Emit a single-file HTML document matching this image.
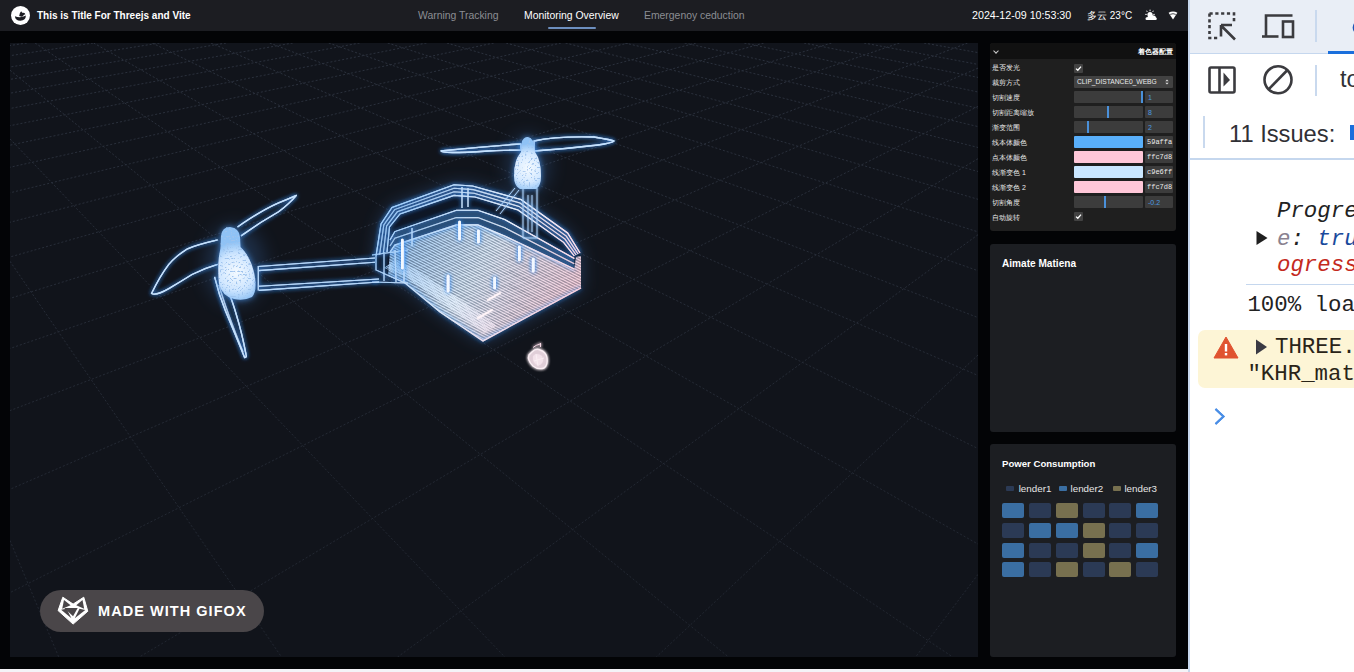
<!DOCTYPE html>
<html><head><meta charset="utf-8">
<style>
*{margin:0;padding:0;box-sizing:border-box}
html,body{width:1354px;height:672px;overflow:hidden;background:#fff;font-family:"Liberation Sans",sans-serif}
#app{position:absolute;left:0;top:0;width:1188px;height:669px;background:#030406}
#hdr{position:absolute;left:0;top:0;width:1188px;height:31px;background:#1c1d22}
.logo{position:absolute;left:11px;top:6px;width:19px;height:19px}
.title{position:absolute;left:37px;top:9px;font-size:10px;font-weight:bold;color:#fff;white-space:nowrap;line-height:13px}
.nav{position:absolute;top:9px;font-size:10.4px;color:#8b8d93;white-space:nowrap;line-height:13px}
.nav.on{color:#fff}
.uline{position:absolute;left:548px;top:27px;width:48px;height:2px;background:#6d8fbf;border-radius:1px}
.rt{position:absolute;top:9px;font-size:10.7px;color:#fff;white-space:nowrap;line-height:13px}
#canvas{position:absolute;left:10px;top:43px;width:968px;height:614px;background:#11141b;overflow:hidden}
.panel{position:absolute;left:990px;width:186px;background:#1c1e22;border-radius:3px}
.ptitle{position:absolute;left:12px;font-size:9.8px;font-weight:bold;color:#fff;white-space:nowrap;line-height:12px}
#gui{position:absolute;left:990px;top:43px;width:186px;height:188px;background:#1f1f1f;border-radius:3px;overflow:hidden}
#gui .tb{position:absolute;left:0;top:0;width:186px;height:16px;background:#111}
#gui .tt{position:absolute;right:3px;top:3.5px;font-size:6.7px;font-weight:bold;color:#fff;line-height:10px}
#gui .lab{position:absolute;left:2px;font-size:7px;color:#ebebeb;line-height:10px;white-space:nowrap}
.w{position:absolute;background:#424242;border-radius:1px}
.cb svg{display:block}
.cb{position:absolute;left:84px;width:9px;height:9px;background:#424242;border-radius:1px}
.sl{position:absolute;left:84px;width:69px;height:12px;background:#3c3c3c;border-radius:1px}
.sl i{position:absolute;top:0;width:2px;height:12px;background:#4a90d9}
.nb{position:absolute;left:155px;width:28px;height:12px;background:#3c3c3c;border-radius:1px;font-size:7px;color:#4a9be0;line-height:13px;padding-left:3px}
.sw{position:absolute;left:84px;width:69px;height:12px;border-radius:1px}
.tx{position:absolute;left:155px;width:28px;height:12px;background:#3c3c3c;border-radius:1px;font-size:7px;color:#ebebeb;line-height:12px;padding-left:2px;font-family:"Liberation Mono",monospace}
#gui .chev{position:absolute;left:4px;top:6px;width:4px;height:4px;border-right:1px solid #ccc;border-bottom:1px solid #ccc;transform:rotate(45deg)}
.sel span{position:absolute;left:3px;top:0;font-size:6.7px;color:#ebebeb;line-height:12px;white-space:nowrap}
.sel b{position:absolute;right:3px;top:0;font-size:7px;color:#ccc;line-height:12px;font-weight:normal}
.leg{position:absolute;top:483px;font-size:9.8px;color:#e6e6e6;line-height:11px;white-space:nowrap}
.lsq{position:absolute;top:486px;width:8px;height:5px;border-radius:1px}
.cell{position:absolute;width:22px;height:15px;border-radius:2px}
.c1{background:#2b3a55}.c2{background:#3a6ea2}.c3{background:#77704f}
#gifox{position:absolute;left:40px;top:590px;width:224px;height:42px;border-radius:21px;background:#4a4649}
#gifox span{position:absolute;left:58px;top:13px;font-size:14.5px;font-weight:bold;color:#fff;letter-spacing:1.05px;line-height:17px;white-space:nowrap}
#dev{position:absolute;left:1188px;top:0;width:166px;height:672px;background:#fff;overflow:hidden}
#dev .bl{position:absolute;left:0;top:0;width:2px;height:672px;background:#c8d8ee}
#dev .tb1{position:absolute;left:2px;top:0;width:164px;height:53px;background:#e9eef6}
#dev .hl{position:absolute;left:2px;height:1.5px;background:#c5d7ee}
#dev .sep{position:absolute;width:1.5px;background:#c9d9ee}
.mono{font-family:"Liberation Mono",monospace;font-size:22.4px;position:absolute;white-space:nowrap;line-height:26px}
#bot{position:absolute;left:0;top:669px;width:1188px;height:3px;background:#f4f3f7}
</style></head><body>
<div id="app">
 <div id="hdr">
  <svg class="logo" viewBox="0 0 19 19"><circle cx="9.5" cy="9.5" r="9.5" fill="#fff"/><path d="M3.9,10.2 Q9.4,12.6 14.9,9.6 Q14.8,14.6 9.4,14.7 Q4.2,14.6 3.9,10.2Z" fill="#1c1d22"/><path d="M8.2,10 Q8,7.2 10.2,5.2 L11.2,6.8 Q13.6,6.4 14.4,8.2 L12.6,8.9 Q12.5,10.4 10.6,10.7Z" fill="#1c1d22"/></svg>
  <div class="title">This is Title For Threejs and Vite</div>
  <div class="nav" style="left:418px">Warning Tracking</div>
  <div class="nav on" style="left:524px">Monitoring Overview</div>
  <div class="nav" style="left:644px">Emergenoy ceduction</div>
  <div class="uline"></div>
  <div class="rt" style="left:972px">2024-12-09 10:53:30</div>
  <div class="rt" style="left:1087px;font-size:10px">多云 23°C</div>
  <svg style="position:absolute;left:1144px;top:9px" width="14" height="12" viewBox="0 0 14 12"><g fill="#fff"><circle cx="6" cy="5.5" r="2.6"/><rect x="5.6" y="0.6" width="0.9" height="1.6"/><rect x="1.2" y="4.9" width="1.6" height="0.9"/><rect x="9.2" y="4.9" width="1.6" height="0.9"/><rect x="2.3" y="1.8" width="1.4" height="0.9" transform="rotate(45 3 2.2)"/><rect x="8.3" y="1.8" width="1.4" height="0.9" transform="rotate(-45 9 2.2)"/><path d="M2.8,11 Q1.4,11 1.5,9.5 Q1.7,8.2 3.2,8.3 Q3.8,6.4 6.2,6.6 Q8,5.6 9.8,6.6 Q11.6,6.8 12,8.6 Q13,9 12.8,10.2 Q12.5,11 11.6,11Z"/></g></svg>
  <svg style="position:absolute;left:1168px;top:11px" width="10" height="9" viewBox="0 0 10 9"><path d="M0.6,1.8 Q5,-0.6 9.4,1.8 L5,8.6Z" fill="#fff"/><path d="M2.2,3.4 Q5,2 7.8,3.4" stroke="#1c1d22" stroke-width="0.8" fill="none"/></svg>
 </div>
 <div id="canvas"></div>
<svg style="position:absolute;left:0;top:0" width="1354" height="672" viewBox="0 0 1354 672">
<defs>
 <clipPath id="cv"><rect x="10" y="43" width="968" height="614"/></clipPath>
 <clipPath id="cpInt"><path d="M390.0,252.0 L394.8,245.0 L456.4,224.9 L477.9,224.9 L504.7,236.0 L574.3,269.1 L576.0,257.0 L581.0,256.0 L581.0,288.0 L483.0,341.0 L440.0,312.0 L405.0,283.0 L388.0,276.0Z"/></clipPath>
 <clipPath id="cpSkirt"><path d="M384.0,268.0 L405.0,276.0 L445.0,305.0 L484.0,333.0 L497.0,326.0 L458.0,298.0 L414.0,268.0 L394.0,260.0Z"/></clipPath>
 <filter id="glow" x="-30%" y="-30%" width="160%" height="160%">
  <feGaussianBlur in="SourceGraphic" stdDeviation="1.8" result="b"/>
  <feMerge><feMergeNode in="b"/><feMergeNode in="b"/><feMergeNode in="SourceGraphic"/></feMerge>
 </filter>
 <filter id="glowS" x="-30%" y="-30%" width="160%" height="160%">
  <feGaussianBlur in="SourceGraphic" stdDeviation="1.0" result="b"/>
  <feMerge><feMergeNode in="b"/><feMergeNode in="SourceGraphic"/></feMerge>
 </filter>
 <filter id="glow2" x="-50%" y="-50%" width="200%" height="200%">
  <feGaussianBlur in="SourceGraphic" stdDeviation="3" result="b"/>
  <feMerge><feMergeNode in="b"/><feMergeNode in="SourceGraphic"/></feMerge>
 </filter>
 <filter id="bglow" x="-30%" y="-30%" width="160%" height="160%">
  <feGaussianBlur in="SourceAlpha" stdDeviation="2" result="b"/>
  <feFlood flood-color="#3d8ef0" flood-opacity="0.9"/><feComposite in2="b" operator="in" result="c"/>
  <feGaussianBlur in="SourceGraphic" stdDeviation="0.6" result="s"/>
  <feMerge><feMergeNode in="c"/><feMergeNode in="c"/><feMergeNode in="s"/><feMergeNode in="SourceGraphic"/></feMerge>
 </filter>
 <filter id="bglow2" x="-50%" y="-50%" width="200%" height="200%">
  <feGaussianBlur in="SourceAlpha" stdDeviation="3" result="b"/>
  <feFlood flood-color="#4a98f0" flood-opacity="0.8"/><feComposite in2="b" operator="in" result="c"/>
  <feMerge><feMergeNode in="c"/><feMergeNode in="SourceGraphic"/></feMerge>
 </filter>
 <filter id="speck" x="-50%" y="-50%" width="200%" height="200%">
  <feGaussianBlur in="SourceAlpha" stdDeviation="3" result="b"/>
  <feFlood flood-color="#4a98f0" flood-opacity="0.85"/><feComposite in2="b" operator="in" result="c"/>
  <feTurbulence type="fractalNoise" baseFrequency="0.55" numOctaves="1" seed="11" result="n"/>
  <feColorMatrix in="n" type="matrix" values="0 0 0 0 0.35  0 0 0 0 0.55  0 0 0 0 0.85  -9 0 0 0 3.8" result="d"/>
  <feComposite in="d" in2="SourceAlpha" operator="in" result="dd"/>
  <feMerge><feMergeNode in="c"/><feMergeNode in="SourceGraphic"/><feMergeNode in="dd"/></feMerge>
 </filter>
 <filter id="bloom" x="-50%" y="-50%" width="200%" height="200%"><feGaussianBlur stdDeviation="9"/></filter>
 <radialGradient id="podg" cx="236" cy="272" r="30" gradientUnits="userSpaceOnUse">
  <stop offset="0" stop-color="#f4faff"/><stop offset="0.6" stop-color="#cfe6ff"/><stop offset="1" stop-color="#8fc2f5"/>
 </radialGradient>
 <radialGradient id="podg2" cx="528" cy="168" r="24" gradientUnits="userSpaceOnUse">
  <stop offset="0" stop-color="#f4faff"/><stop offset="0.6" stop-color="#d4e9ff"/><stop offset="1" stop-color="#8fc2f5"/>
 </radialGradient>
 <linearGradient id="gridg" x1="0" y1="43" x2="0" y2="657" gradientUnits="userSpaceOnUse">
  <stop offset="0" stop-color="#2a303c"/><stop offset="1" stop-color="#20252f"/>
 </linearGradient>
 <linearGradient id="bodyg" x1="390" y1="230" x2="560" y2="320" gradientUnits="userSpaceOnUse">
  <stop offset="0" stop-color="#4a80c0" stop-opacity="0.3"/>
  <stop offset="0.55" stop-color="#b0d0f0" stop-opacity="0.42"/>
  <stop offset="1" stop-color="#e8b8c8" stop-opacity="0.4"/>
 </linearGradient>
 <linearGradient id="lineg" x1="390" y1="215" x2="560" y2="325" gradientUnits="userSpaceOnUse">
  <stop offset="0" stop-color="#9ccdfc"/>
  <stop offset="0.5" stop-color="#e4f0fd"/>
  <stop offset="1" stop-color="#ffd6e2"/>
 </linearGradient>
</defs>
<g clip-path="url(#cv)">

<path d="M26.8,43.0L10.0,45.5M93.0,43.0L10.0,55.7M159.5,43.0L10.0,67.0M226.0,43.0L10.0,79.4M292.7,43.0L10.0,93.2M359.6,43.0L10.0,108.5M426.5,43.0L10.0,125.7M493.7,43.0L10.0,145.2M560.9,43.0L10.0,167.3M628.3,43.0L10.0,192.8M695.9,43.0L10.0,222.3M763.6,43.0L10.0,257.0M831.4,43.0L10.0,298.4M899.4,43.0L10.0,348.5M967.5,43.0L10.0,410.6M978.0,68.1L10.0,489.3M978.0,106.4L10.0,592.6M978.0,158.7L139.4,657.0M978.0,234.7L397.6,657.0M978.0,355.0L656.3,657.0M978.0,574.4L915.6,657.0M924.1,43.0L978.0,52.6M864.1,43.0L978.0,64.4M804.1,43.0L978.0,77.4M744.3,43.0L978.0,92.0M684.6,43.0L978.0,108.2M625.0,43.0L978.0,126.6M565.5,43.0L978.0,147.5M506.1,43.0L978.0,171.5M446.9,43.0L978.0,199.3M387.7,43.0L978.0,231.9M328.7,43.0L978.0,270.7M269.7,43.0L978.0,317.6M210.9,43.0L978.0,375.5M152.2,43.0L978.0,448.6M93.6,43.0L978.0,544.1M35.1,43.0L952.7,657.0M10.0,70.2L728.5,657.0M10.0,138.9L504.8,657.0M10.0,261.3L281.5,657.0M10.0,540.5L58.7,657.0" stroke="url(#gridg)" stroke-width="1" stroke-dasharray="2 2" fill="none"/>
<path d="M376.0,256.0 L381.0,224.0 L392.0,207.5 L454.0,184.7 L472.5,186.0 L521.0,199.5 L567.6,233.0 L580.0,253.0 L581.0,288.0 L483.0,341.0 L440.0,312.0 L405.0,283.0 L376.0,270.0Z" fill="#3f7cc8" opacity="0.4" filter="url(#bloom)"/>
<ellipse cx="235" cy="265" rx="30" ry="40" fill="#3f7cc8" opacity="0.25" filter="url(#bloom)"/>
<ellipse cx="528" cy="165" rx="22" ry="30" fill="#3f7cc8" opacity="0.25" filter="url(#bloom)"/>
<path d="M376.0,256.0 L381.0,224.0 L392.0,207.5 L454.0,184.7 L472.5,186.0 L521.0,199.5 L567.6,233.0 L580.0,253.0 L581.0,288.0 L483.0,341.0 L440.0,312.0 L405.0,283.0 L376.0,270.0Z" fill="#0c1320" opacity="0.9"/>
<path d="M376.0,256.0 L381.0,224.0 L392.0,207.5 L454.0,184.7 L472.5,186.0 L521.0,199.5 L567.6,233.0 L580.0,253.0 L574.3,256.0 L563.6,242.3 L518.0,210.0 L475.0,197.0 L454.0,195.4 L400.0,214.0 L389.5,227.0 L387.0,252.0Z" fill="#6aa6ea" opacity="0.22"/>
<path d="M390.0,240.0 L394.8,231.6 L456.4,210.2 L477.9,210.2 L504.7,219.6 L574.3,258.4 L574.3,269.1 L504.7,236.0 L477.9,224.9 L456.4,224.9 L394.8,245.0 L390.0,252.0Z" fill="#6aa6ea" opacity="0.3"/>
<path d="M390.0,252.0 L394.8,245.0 L456.4,224.9 L477.9,224.9 L504.7,236.0 L574.3,269.1 L576.0,257.0 L581.0,256.0 L581.0,288.0 L483.0,341.0 L440.0,312.0 L405.0,283.0 L388.0,276.0Z" fill="url(#bodyg)"/>
<g clip-path="url(#cpInt)" fill="none" stroke="url(#lineg)" filter="url(#glowS)">
 <path d="M360,45.2L600,170.0M360,48.0L600,172.8M360,50.8L600,175.6M360,53.6L600,178.4M360,56.4L600,181.2M360,59.2L600,184.0M360,62.0L600,186.8M360,64.8L600,189.6M360,67.6L600,192.4M360,70.4L600,195.2M360,73.2L600,198.0M360,76.0L600,200.8M360,78.8L600,203.6M360,81.6L600,206.4M360,84.4L600,209.2M360,87.2L600,212.0M360,90.0L600,214.8M360,92.8L600,217.6M360,95.6L600,220.4M360,98.4L600,223.2M360,101.2L600,226.0M360,104.0L600,228.8M360,106.8L600,231.6M360,109.6L600,234.4M360,112.4L600,237.2M360,115.2L600,240.0M360,118.0L600,242.8M360,120.8L600,245.6M360,123.6L600,248.4M360,126.4L600,251.2M360,129.2L600,254.0M360,132.0L600,256.8M360,134.8L600,259.6M360,137.6L600,262.4M360,140.4L600,265.2M360,143.2L600,268.0M360,146.0L600,270.8M360,148.8L600,273.6M360,151.6L600,276.4M360,154.4L600,279.2M360,157.2L600,282.0M360,160.0L600,284.8M360,162.8L600,287.6M360,165.6L600,290.4M360,168.4L600,293.2M360,171.2L600,296.0M360,174.0L600,298.8M360,176.8L600,301.6M360,179.6L600,304.4M360,182.4L600,307.2M360,185.2L600,310.0M360,188.0L600,312.8M360,190.8L600,315.6M360,193.6L600,318.4M360,196.4L600,321.2M360,199.2L600,324.0M360,202.0L600,326.8M360,204.8L600,329.6M360,207.6L600,332.4M360,210.4L600,335.2M360,213.2L600,338.0M360,216.0L600,340.8M360,218.8L600,343.6M360,221.6L600,346.4M360,224.4L600,349.2M360,227.2L600,352.0M360,230.0L600,354.8M360,232.8L600,357.6M360,235.6L600,360.4M360,238.4L600,363.2M360,241.2L600,366.0M360,244.0L600,368.8M360,246.8L600,371.6M360,249.6L600,374.4M360,252.4L600,377.2M360,255.2L600,380.0M360,258.0L600,382.8M360,260.8L600,385.6M360,263.6L600,388.4M360,266.4L600,391.2M360,269.2L600,394.0M360,272.0L600,396.8M360,274.8L600,399.6M360,277.6L600,402.4M360,280.4L600,405.2M360,283.2L600,408.0M360,286.0L600,410.8M360,288.8L600,413.6M360,291.6L600,416.4M360,294.4L600,419.2M360,297.2L600,422.0M360,300.0L600,424.8M360,302.8L600,427.6M360,305.6L600,430.4M360,308.4L600,433.2M360,311.2L600,436.0M360,314.0L600,438.8M360,316.8L600,441.6M360,319.6L600,444.4M360,322.4L600,447.2M360,325.2L600,450.0M360,328.0L600,452.8M360,330.8L600,455.6M360,333.6L600,458.4M360,336.4L600,461.2M360,339.2L600,464.0M360,342.0L600,466.8M360,344.8L600,469.6M360,347.6L600,472.4" stroke-width="1.1" opacity="0.95"/>
 <path d="M360,170.0L600,78.8M360,176.0L600,84.8M360,182.0L600,90.8M360,188.0L600,96.8M360,194.0L600,102.8M360,200.0L600,108.8M360,206.0L600,114.8M360,212.0L600,120.8M360,218.0L600,126.8M360,224.0L600,132.8M360,230.0L600,138.8M360,236.0L600,144.8M360,242.0L600,150.8M360,248.0L600,156.8M360,254.0L600,162.8M360,260.0L600,168.8M360,266.0L600,174.8M360,272.0L600,180.8M360,278.0L600,186.8M360,284.0L600,192.8M360,290.0L600,198.8M360,296.0L600,204.8M360,302.0L600,210.8M360,308.0L600,216.8M360,314.0L600,222.8M360,320.0L600,228.8M360,326.0L600,234.8M360,332.0L600,240.8M360,338.0L600,246.8M360,344.0L600,252.8M360,350.0L600,258.8M360,356.0L600,264.8M360,362.0L600,270.8M360,368.0L600,276.8M360,374.0L600,282.8M360,380.0L600,288.8M360,386.0L600,294.8M360,392.0L600,300.8M360,398.0L600,306.8M360,404.0L600,312.8M360,410.0L600,318.8M360,416.0L600,324.8M360,422.0L600,330.8M360,428.0L600,336.8M360,434.0L600,342.8M360,440.0L600,348.8" stroke-width="0.7" opacity="0.4"/>
</g>
<g clip-path="url(#cpSkirt)" fill="none" stroke="url(#lineg)" filter="url(#glowS)">
 <path d="M360,-7.6L600,170.0M360,-5.2L600,172.4M360,-2.8L600,174.8M360,-0.4L600,177.2M360,2.0L600,179.6M360,4.4L600,182.0M360,6.8L600,184.4M360,9.2L600,186.8M360,11.6L600,189.2M360,14.0L600,191.6M360,16.4L600,194.0M360,18.8L600,196.4M360,21.2L600,198.8M360,23.6L600,201.2M360,26.0L600,203.6M360,28.4L600,206.0M360,30.8L600,208.4M360,33.2L600,210.8M360,35.6L600,213.2M360,38.0L600,215.6M360,40.4L600,218.0M360,42.8L600,220.4M360,45.2L600,222.8M360,47.6L600,225.2M360,50.0L600,227.6M360,52.4L600,230.0M360,54.8L600,232.4M360,57.2L600,234.8M360,59.6L600,237.2M360,62.0L600,239.6M360,64.4L600,242.0M360,66.8L600,244.4M360,69.2L600,246.8M360,71.6L600,249.2M360,74.0L600,251.6M360,76.4L600,254.0M360,78.8L600,256.4M360,81.2L600,258.8M360,83.6L600,261.2M360,86.0L600,263.6M360,88.4L600,266.0M360,90.8L600,268.4M360,93.2L600,270.8M360,95.6L600,273.2M360,98.0L600,275.6M360,100.4L600,278.0M360,102.8L600,280.4M360,105.2L600,282.8M360,107.6L600,285.2M360,110.0L600,287.6M360,112.4L600,290.0M360,114.8L600,292.4M360,117.2L600,294.8M360,119.6L600,297.2M360,122.0L600,299.6M360,124.4L600,302.0M360,126.8L600,304.4M360,129.2L600,306.8M360,131.6L600,309.2M360,134.0L600,311.6M360,136.4L600,314.0M360,138.8L600,316.4M360,141.2L600,318.8M360,143.6L600,321.2M360,146.0L600,323.6M360,148.4L600,326.0M360,150.8L600,328.4M360,153.2L600,330.8M360,155.6L600,333.2M360,158.0L600,335.6M360,160.4L600,338.0M360,162.8L600,340.4M360,165.2L600,342.8M360,167.6L600,345.2M360,170.0L600,347.6M360,172.4L600,350.0M360,174.8L600,352.4M360,177.2L600,354.8M360,179.6L600,357.2M360,182.0L600,359.6M360,184.4L600,362.0M360,186.8L600,364.4M360,189.2L600,366.8M360,191.6L600,369.2M360,194.0L600,371.6M360,196.4L600,374.0M360,198.8L600,376.4M360,201.2L600,378.8M360,203.6L600,381.2M360,206.0L600,383.6M360,208.4L600,386.0M360,210.8L600,388.4M360,213.2L600,390.8M360,215.6L600,393.2M360,218.0L600,395.6M360,220.4L600,398.0M360,222.8L600,400.4M360,225.2L600,402.8M360,227.6L600,405.2M360,230.0L600,407.6M360,232.4L600,410.0M360,234.8L600,412.4M360,237.2L600,414.8M360,239.6L600,417.2M360,242.0L600,419.6M360,244.4L600,422.0M360,246.8L600,424.4M360,249.2L600,426.8M360,251.6L600,429.2M360,254.0L600,431.6M360,256.4L600,434.0M360,258.8L600,436.4M360,261.2L600,438.8M360,263.6L600,441.2M360,266.0L600,443.6M360,268.4L600,446.0M360,270.8L600,448.4M360,273.2L600,450.8M360,275.6L600,453.2M360,278.0L600,455.6M360,280.4L600,458.0M360,282.8L600,460.4M360,285.2L600,462.8M360,287.6L600,465.2M360,290.0L600,467.6M360,292.4L600,470.0M360,294.8L600,472.4M360,297.2L600,474.8M360,299.6L600,477.2M360,302.0L600,479.6M360,304.4L600,482.0M360,306.8L600,484.4M360,309.2L600,486.8M360,311.6L600,489.2M360,314.0L600,491.6M360,316.4L600,494.0M360,318.8L600,496.4M360,321.2L600,498.8M360,323.6L600,501.2M360,326.0L600,503.6M360,328.4L600,506.0M360,330.8L600,508.4M360,333.2L600,510.8M360,335.6L600,513.2M360,338.0L600,515.6M360,340.4L600,518.0M360,342.8L600,520.4M360,345.2L600,522.8M360,347.6L600,525.2" stroke-width="1" opacity="0.9"/>
</g>
<g filter="url(#bglow)" fill="none" stroke="url(#lineg)" stroke-width="1.1">
 <path d="M376.0,256.0 L381.0,224.0 L392.0,207.5 L454.0,184.7 L472.5,186.0 L521.0,199.5 L567.6,233.0 L580.0,253.0" opacity="1"/>
 <path d="M379.6,254.7 L383.8,225.0 L394.6,209.6 L454.0,188.2 L473.3,189.6 L520.0,203.0 L566.3,236.1 L578.1,254.0" opacity="0.75"/>
 <path d="M383.3,253.4 L386.6,226.0 L397.3,211.8 L454.0,191.8 L474.1,193.3 L519.0,206.4 L565.0,239.1 L576.2,255.0" opacity="0.75"/>
 <path d="M387.0,252.0 L389.5,227.0 L400.0,214.0 L454.0,195.4 L475.0,197.0 L518.0,210.0 L563.6,242.3 L574.3,256.0" opacity="0.95"/>
 <path d="M390.0,240.0 L394.8,231.6 L456.4,210.2 L477.9,210.2 L504.7,219.6 L574.3,258.4" opacity="1"/>
 <path d="M390.0,246.0 L394.8,238.3 L456.4,217.6 L477.9,217.6 L504.7,227.8 L574.3,263.8" opacity="0.7"/>
 <path d="M390.0,252.0 L394.8,245.0 L456.4,224.9 L477.9,224.9 L504.7,236.0 L574.3,269.1" opacity="0.9"/>
 <path d="M581,288 L483,341 L440,312 L405,283 L376,270 L376,256" opacity="0.8"/>
 <path d="M372,255 L408,250 M372,282 L408,283 M384,252 L384,281 M395,250 L396,282 M404,248 L404,283" opacity="0.8"/>
 <path d="M462,187 L462,208 M468,188 L468,207 M412,228 L412,246" opacity="0.9"/>
</g>
<g filter="url(#bglow)" stroke="#f2f8ff" stroke-width="2.6" stroke-linecap="round" fill="none">
 <path d="M402.3,240 L402.3,268"/>
 <path d="M459.6,222 L459.6,239"/>
 <path d="M478.4,231 L478.4,242"/>
 <path d="M519.3,247 L519.3,260"/>
 <path d="M533.2,259 L533.2,271"/>
 <path d="M448.1,276 L448.1,291"/>
 <path d="M494.7,278 L494.7,288"/>
</g>
<g filter="url(#glowS)" stroke="#fff4f8" stroke-width="2" stroke-linecap="round" fill="none">
 <path d="M488,300 L500,293 M478,318 L492,310"/>
</g>
 <!-- left propeller -->
 <g filter="url(#bglow)" fill="none" stroke="#c4e2ff" stroke-width="1.3" stroke-linejoin="round">
  <path d="M237.5,227 Q262,210 278.6,202.9 Q288,199 296.4,195.3 Q290,203 278.6,211.8 L260.7,222.5 L241,235.9"/>
  <path d="M217.7,239.9 Q196,245 187.5,248.8 Q176,256 168.8,264.4 Q160,276 151.5,293.5 Q156,296 168.8,288.6 Q180,282 192,274.5 Q205,268 217.7,264.4"/>
  <path d="M214.6,276.8 Q219,295 225.5,311 Q236,336 244.7,357.7 Q247,357 246.1,354.9 Q242,333 236.5,315.2 Q233,303 229.7,294.7"/>
  <path d="M219,285 Q226,310 243,352" opacity="0.6"/>
 </g>
 <!-- left pod -->
 <g filter="url(#speck)">
  <path d="M221,236 Q222,227 230,227 Q239,228 240,237 L240.5,247 Q250,256 254,272 Q258,290 252,297 Q244,301 234,299 Q222,296 219,284 Q217,262 220.5,248 Z" fill="url(#podg)"/>
 </g>
 <!-- arm -->
 <g filter="url(#bglow)" fill="none" stroke="#b4d8fc" stroke-width="1.1">
  <path d="M258,266.5 L375,258"/>
  <path d="M258,270.6 L375,262.3"/>
  <path d="M259,286.3 L379,279"/>
  <path d="M259,290.4 L379,282"/>
  <path d="M258.3,266 L258.3,290.5"/>
 </g>

 <!-- right propeller -->
 <g filter="url(#bglow)" fill="none" stroke="#c4e2ff" stroke-width="1.3" stroke-linejoin="round">
  <path d="M521,144 Q488,146 441,151 Q441,154 488,151 Q510,150 521,150 Z"/>
  <path d="M534,141 Q556,136 594,137 Q612,140 614,141 Q612,143 598,145 Q565,149 534,151 Z"/>
 </g>
 <g filter="url(#speck)">
  <path d="M521,152 L522,141 Q527,133 533,141 L535,152 Q541,160 541,176 Q541,186 536,189 L520,189 Q514,186 514,176 Q514,160 521,152Z" fill="url(#podg2)"/>
 </g>
 <g filter="url(#glowS)" fill="none" stroke="#a8d0fa" stroke-width="1">
  <path d="M523,188 L523,238 M537,188 L537,238 M528,195 L528,232 M532,195 L532,232 M523,238 L537,238"/>
  <path d="M515,188 L496,211 M519,190 L500,214"/>
 </g>
 <!-- small object -->
 <g filter="url(#glow)">
  <path d="M532,352 Q536,348 540,350 Q546,352 547,358 Q548,365 544,368 Q538,370 533,366 Q527,360 529,355 Z" fill="#e8d4de" fill-opacity="0.6" stroke="#fbeff4" stroke-width="1.4"/>
  <path d="M533,356 Q537,352 542,356 Q545,362 540,365 Q535,366 533,360Z" fill="#f6e6ee" opacity="0.75"/>
  <path d="M536,354 L538,366 M534,361 L544,358" stroke="#fbeff4" stroke-width="0.9" fill="none"/>
  <path d="M533,347.5 Q536,345 540,344 M540.5,343 L540.5,347" stroke="#f5d8e4" stroke-width="1" fill="none"/>
 </g>
</g>
</svg>

 <div id="gifox">
  <svg style="position:absolute;left:17px;top:6px" width="32" height="29" viewBox="0 0 32 29"><path d="M5.8,1.2 L16.1,8.1 L26.75,1.2 L30.8,15.25 L16.1,28.1 L1.1,14.6Z" fill="#fff" stroke="#fff" stroke-width="1" stroke-linejoin="round"/><g fill="#4a4649"><path d="M6.97,3.97 L13.60,9.22 L5.23,12.72Z"/><path d="M25.51,3.97 L19.26,9.22 L27.13,12.72Z"/><path d="M7.21,12.05 L20.71,12.05 L16.08,20.30Z"/><path d="M4.15,13.70 L9.65,12.70 L14.40,22.20Z"/><path d="M28.28,13.93 L22.53,12.68 L17.78,22.18Z"/></g></svg>
  <span>MADE WITH GIFOX</span>
 </div>
 <div id="gui">
  <div class="tb"><div class="chev"></div><div class="tt">着色器配置</div></div>
    <div class="lab" style="top:19.5px">是否发光</div>
  <div class="lab" style="top:34.5px">裁剪方式</div>
  <div class="lab" style="top:49.5px">切割速度</div>
  <div class="lab" style="top:64.5px">切割距离缩放</div>
  <div class="lab" style="top:79.5px">渐变范围</div>
  <div class="lab" style="top:94.5px">线本体颜色</div>
  <div class="lab" style="top:109.5px">点本体颜色</div>
  <div class="lab" style="top:124.5px">线渐变色 1</div>
  <div class="lab" style="top:139.5px">线渐变色 2</div>
  <div class="lab" style="top:154.5px">切割角度</div>
  <div class="lab" style="top:169.5px">自动旋转</div>
  <div class="cb" style="top:21px"><svg width="9" height="9" viewBox="0 0 9 9"><path d="M2 4.6L3.8 6.3L7 2.6" stroke="#fff" stroke-width="1.3" fill="none"/></svg></div>
  <div class="w sel" style="left:84px;top:33px;width:99px;height:12px"><span>CLIP_DISTANCE0_WEBG</span><svg style="position:absolute;right:4px;top:3px" width="4" height="6" viewBox="0 0 4 6"><path d="M0.3,2.3 L2,0.4 L3.7,2.3Z M0.3,3.7 L2,5.6 L3.7,3.7Z" fill="#ddd"/></svg></div>
  <div class="sl" style="top:48px"><i style="left:67px"></i></div><div class="nb" style="top:48px">1</div>
  <div class="sl" style="top:63px"><i style="left:33px"></i></div><div class="nb" style="top:63px">8</div>
  <div class="sl" style="top:78px"><i style="left:13px"></i></div><div class="nb" style="top:78px">2</div>
  <div class="sw" style="top:93px;background:#59affa"></div><div class="tx" style="top:93px">59affa</div>
  <div class="sw" style="top:108px;background:#ffc7d8"></div><div class="tx" style="top:108px">ffc7d8</div>
  <div class="sw" style="top:123px;background:#c9e6ff"></div><div class="tx" style="top:123px">c9e6ff</div>
  <div class="sw" style="top:138px;background:#ffc7d8"></div><div class="tx" style="top:138px">ffc7d8</div>
  <div class="sl" style="top:153px"><i style="left:30px"></i></div><div class="nb" style="top:153px">-0.2</div>
  <div class="cb" style="top:169px"><svg width="9" height="9" viewBox="0 0 9 9"><path d="M2 4.6L3.8 6.3L7 2.6" stroke="#fff" stroke-width="1.3" fill="none"/></svg></div>

 </div>
 <div class="panel" style="top:244px;height:188px"><div class="ptitle" style="top:14px;font-size:10.1px">Aimate Matiena</div></div>
 <div class="panel" style="top:444px;height:213px"><div class="ptitle" style="top:14px;font-size:9.6px">Power Consumption</div></div>
 <div class="lsq c1" style="left:1006px"></div><div class="leg" style="left:1018.7px">lender1</div>
 <div class="lsq c2" style="left:1059px"></div><div class="leg" style="left:1070.5px">lender2</div>
 <div class="lsq c3" style="left:1113px"></div><div class="leg" style="left:1124.4px">lender3</div>
  <div class="cell c2" style="left:1002.0px;top:503.0px"></div>
 <div class="cell c1" style="left:1028.8px;top:503.0px"></div>
 <div class="cell c3" style="left:1055.7px;top:503.0px"></div>
 <div class="cell c1" style="left:1082.5px;top:503.0px"></div>
 <div class="cell c1" style="left:1109.4px;top:503.0px"></div>
 <div class="cell c2" style="left:1136.2px;top:503.0px"></div>
 <div class="cell c1" style="left:1002.0px;top:522.8px"></div>
 <div class="cell c2" style="left:1028.8px;top:522.8px"></div>
 <div class="cell c2" style="left:1055.7px;top:522.8px"></div>
 <div class="cell c3" style="left:1082.5px;top:522.8px"></div>
 <div class="cell c1" style="left:1109.4px;top:522.8px"></div>
 <div class="cell c1" style="left:1136.2px;top:522.8px"></div>
 <div class="cell c2" style="left:1002.0px;top:542.6px"></div>
 <div class="cell c1" style="left:1028.8px;top:542.6px"></div>
 <div class="cell c1" style="left:1055.7px;top:542.6px"></div>
 <div class="cell c3" style="left:1082.5px;top:542.6px"></div>
 <div class="cell c1" style="left:1109.4px;top:542.6px"></div>
 <div class="cell c2" style="left:1136.2px;top:542.6px"></div>
 <div class="cell c2" style="left:1002.0px;top:562.4px"></div>
 <div class="cell c1" style="left:1028.8px;top:562.4px"></div>
 <div class="cell c3" style="left:1055.7px;top:562.4px"></div>
 <div class="cell c1" style="left:1082.5px;top:562.4px"></div>
 <div class="cell c3" style="left:1109.4px;top:562.4px"></div>
 <div class="cell c1" style="left:1136.2px;top:562.4px"></div>

</div>
<div id="bot"></div>
<div id="dev">
 <div class="bl"></div>
 <div class="tb1"></div>
 <div class="hl" style="top:52.5px;width:164px"></div>
 <div style="position:absolute;left:140px;top:51px;width:26px;height:3px;background:#1a6fdc"></div>
 <svg style="position:absolute;left:0;top:0" width="166" height="440" viewBox="1188 0 166 440">
  <g fill="none" stroke="#3b3b3f" stroke-width="2.6">
   <path d="M1209.5,13.5 h24.5 v9" stroke-dasharray="3.2 2.6"/>
   <path d="M1209.5,13.5 v24.5 h9" stroke-dasharray="3.2 2.6"/>
   <path d="M1221,25.5 L1235,39.5 M1221,25 h11 M1221,25 v11.5"/>
   <path d="M1266,36 v-20.5 h26.5"/>
   <path d="M1262,36.5 h16.5"/>
   <rect x="1283" y="21.5" width="10" height="15.5"/>
   <rect x="1209.5" y="67.5" width="25" height="25" rx="1.5"/>
   <path d="M1219.5,67.5 v25"/>
   <circle cx="1278" cy="79.8" r="13.5"/>
   <path d="M1269,89 L1287,70.5"/>
  </g>
  <path d="M1223.5,72.5 L1230,80 L1223.5,86.5Z" fill="#3b3b3f"/>
  <path d="M1356.5,22 Q1351.5,27.5 1356.5,33" stroke="#1d55b5" stroke-width="2.6" fill="none"/>
  <rect x="1350" y="125" width="4" height="15" fill="#1a6fdc"/>
  <path d="M1256.5,231 L1267.5,238 L1256.5,245Z" fill="#1f1f1f"/>
  <path d="M1256,339.5 L1267,347 L1256,354.5Z" fill="#3a3a44"/>
  <path d="M1215.5,409 L1223.5,416.5 L1215.5,424" stroke="#4a8ee6" stroke-width="2" fill="none"/>
 </svg>
 <div class="sep" style="left:127px;top:10px;height:32px"></div>
 <div class="sep" style="left:127px;top:64.5px;height:31px"></div>
 <div style="position:absolute;left:152px;top:66px;font-size:23.5px;color:#303035;line-height:26px;white-space:nowrap">to</div>
 <div class="sep" style="left:15px;top:116px;height:32px"></div>
 <div style="position:absolute;left:41px;top:120.5px;font-size:23.7px;color:#303035;line-height:27px;white-space:nowrap">11 Issues:</div>
 <div class="hl" style="top:158.3px;width:164px"></div>
 <div class="mono" style="left:89px;top:198px;font-style:italic;color:#222">Progre</div>
 <div class="mono" style="left:89px;top:225.5px;font-style:italic"><span style="color:#8a8290">e</span><span style="color:#222">:</span> <span style="color:#1a4a9c">tru</span></div>
 <div class="mono" style="left:89px;top:251.5px;font-style:italic;color:#c42a1e">ogress</div>
 <div class="hl" style="left:58px;top:283.8px;width:108px"></div>
 <div class="mono" style="left:59.4px;top:292px;color:#222">100% loa</div>
 <div style="position:absolute;left:10px;top:330px;width:170px;height:58px;background:#fdf5d6;border-radius:7px"></div>
 <svg style="position:absolute;left:25px;top:336px" width="26" height="23" viewBox="0 0 26 23"><path d="M13,1 L25,22 L1,22Z" fill="#e05330" stroke="#e05330" stroke-linejoin="round" stroke-width="1"/><rect x="11.8" y="8" width="2.4" height="7.5" fill="#fff"/><rect x="11.8" y="17" width="2.4" height="2.4" fill="#fff"/></svg>
 <svg style="position:absolute;left:0;top:330px" width="166" height="58" viewBox="1188 330 166 58"><path d="M1256,339.5 L1267,347 L1256,354.5Z" fill="#3a3a44"/></svg>
 <div class="mono" style="left:87px;top:334px;color:#2a2418">THREE.</div>
 <div class="mono" style="left:59.4px;top:361px;color:#2a2418">"KHR_mat</div>
 <svg style="position:absolute;left:0;top:400px" width="60" height="30" viewBox="1188 400 60 30"><path d="M1215.5,409 L1223.5,416.5 L1215.5,424" stroke="#4a8ee6" stroke-width="2" fill="none"/></svg>
</div>
</body></html>
